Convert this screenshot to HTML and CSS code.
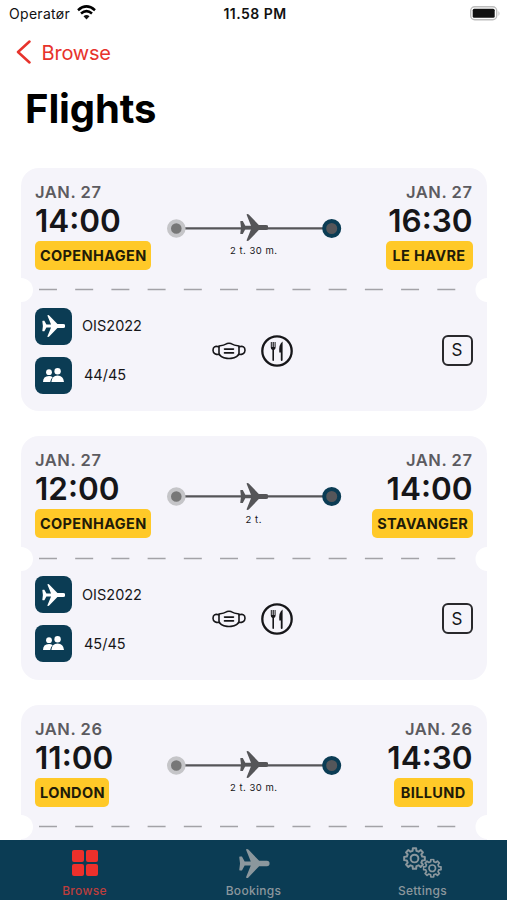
FILE: index.html
```html
<!DOCTYPE html>
<html lang="en">
<head>
<meta charset="utf-8">
<title>Flights</title>
<link rel="stylesheet" href="styles.css">
</head>
<body>
<svg class="defs" aria-hidden="true">
  <symbol id="plane" viewBox="0 0 28 27"><path d="M.8 7H2.8L5.3 11.7H11L6.6.8Q6.5 0 7.4 0 8.4 0 9 .8L18.8 11H26a2.5 2.5 0 0 1 0 5H18.8L9 26.2Q8.4 27 7.4 27 6.5 27 6.6 26.2L11 15.3H5.3L2.8 20H.8Q.2 20 .3 19.2L1 13.5.3 7.8Q.2 7 .8 7z"/></symbol>
  <symbol id="people" viewBox="0 0 21 15"><circle cx="6" cy="4.2" r="2.9"/><circle cx="14.6" cy="3.3" r="3.2"/><path d="M0 14q0-6 6-6 2.200 0 3.700 1.300Q7.400 11 7.200 14zM8.400 14q.4-6.500 6.200-6.500T21 14z"/></symbol>
  <symbol id="mask" viewBox="0 0 34 18"><g fill="none" stroke="currentColor" stroke-width="1.600" stroke-linecap="round" stroke-linejoin="round"><path d="M7 4Q12 3.400 15 1.600 17 .8 19 1.600 22 3.400 27 4V11.500Q26 15.200 19 16.400 17 16.700 15 16.400 8 15.200 7 11.500z"/><path d="M7 4.800C3 3.500 1 5 1 8.300S4 12.800 7.500 12.500M27 4.800c4-1.300 6 .2 6 3.500s-3 4.500-6.500 4.200M12.500 7.100h9M12.500 10.900h9"/></g></symbol>
  <symbol id="meal" viewBox="0 0 32 32"><circle cx="16" cy="16" r="14.700" fill="none" stroke="currentColor" stroke-width="2.300"/><path d="M9.800 7h1v5h.8V7h1.200v5h.8V7h1v5.500q0 1.800-1.600 2.400V25q0 1-.8 1t-.8-1V14.900q-1.600-.6-1.600-2.400zM21.600 6.500V25q0 1-.9 1t-.9-1V17.500h-1.500Q17.600 9 21.600 6.500z"/></symbol>
  <symbol id="gear" viewBox="-11 -11 22 22"><path d="M7.370-1.840 9.880-1.560V1.560L7.370 1.840 6.510 3.910 8.090 5.880 5.880 8.090 3.910 6.510 1.840 7.370 1.560 9.880H-1.560L-1.840 7.370-3.910 6.510-5.880 8.090-8.090 5.880-6.510 3.910-7.370 1.840-9.880 1.560V-1.560L-7.370-1.840-6.510-3.910-8.090-5.880-5.880-8.090-3.910-6.510-1.840-7.370-1.560-9.880H1.560L1.840-7.370 3.910-6.510 5.880-8.090 8.090-5.880 6.510-3.910z"/><circle r="3.700"/></symbol>
  <symbol id="route" viewBox="0 0 176 28"><path d="M10 14.300H166" stroke="#555558" stroke-width="2.300"/><circle cx="10.300" cy="14.500" r="7.300" fill="#777" stroke="#c5c5c8" stroke-width="4"/><circle cx="165.700" cy="14.500" r="7.500" fill="#55565a" stroke="#0b3c54" stroke-width="4"/></symbol>
  <symbol id="perforation" viewBox="0 0 467 26"><circle cx="0" cy="13" r="12" fill="#fff"/><circle cx="467" cy="13" r="12" fill="#fff"/><path d="M18 12.500H437" stroke="#a3a2a7" stroke-width="1.500" stroke-dasharray="18 18.250"/></symbol>
</svg>
<div class="screen">
  <header class="status">
    <div class="carrier"><span>Operatør</span>
      <svg width="19" height="15" viewBox="0 0 19 15"><g fill="none" stroke="#000" stroke-width="2.500"><path d="M1 5.200Q9.500-2.400 18 5.200M4 8.500q5.500-4.800 11 0"/></g><path d="M6.500 11.200q3-2.600 6 0l-3 3.300z"/></svg>
    </div>
    <div class="clock">11.58 PM</div>
    <svg class="battery" width="31" height="15" viewBox="0 0 31 15"><rect x=".7" y=".7" width="26" height="13" rx="4" fill="#fff" stroke="#bdbdbd" stroke-width="1.400"/><rect x="2.700" y="2.700" width="22" height="9" rx="1.500"/><path d="M28.500 5q2 2.300 0 5z" fill="#bbb"/></svg>
  </header>
  <nav class="back"><svg width="16" height="24" viewBox="0 0 16 24"><path d="M13.500 1.500 2 12l11.500 10.500" fill="none" stroke="#e7332c" stroke-width="2.500" stroke-linecap="round" stroke-linejoin="round"/></svg><span>Browse</span></nav>
  <h1>Flights</h1>
  <main class="list">
    <article class="ticket">
      <section class="trip">
        <div class="stop"><div class="date">JAN. 27</div><div class="time">14:00</div><div class="city">COPENHAGEN</div></div>
        <div class="route"><div class="track"><svg class="line"><use href="#route"/></svg><svg class="craft"><use href="#plane"/></svg></div><div class="duration">2 t. 30 m.</div></div>
        <div class="stop end"><div class="date">JAN. 27</div><div class="time">16:30</div><div class="city roomy">LE HAVRE</div></div>
      </section>
      <svg class="perforation"><use href="#perforation"/></svg>
      <section class="details">
        <div class="facts"><div class="fact"><i><svg class="small-plane"><use href="#plane"/></svg></i><span>OIS2022</span></div><div class="fact seats"><i><svg class="people"><use href="#people"/></svg></i><span>44/45</span></div></div>
        <div class="services"><svg class="mask"><use href="#mask"/></svg><svg class="meal"><use href="#meal"/></svg></div>
        <div class="class">S</div>
      </section>
    </article>
    <article class="ticket">
      <section class="trip">
        <div class="stop"><div class="date">JAN. 27</div><div class="time">12:00</div><div class="city">COPENHAGEN</div></div>
        <div class="route"><div class="track"><svg class="line"><use href="#route"/></svg><svg class="craft"><use href="#plane"/></svg></div><div class="duration">2 t.</div></div>
        <div class="stop end"><div class="date">JAN. 27</div><div class="time">14:00</div><div class="city stavanger">STAVANGER</div></div>
      </section>
      <svg class="perforation"><use href="#perforation"/></svg>
      <section class="details">
        <div class="facts"><div class="fact"><i><svg class="small-plane"><use href="#plane"/></svg></i><span>OIS2022</span></div><div class="fact seats"><i><svg class="people"><use href="#people"/></svg></i><span>45/45</span></div></div>
        <div class="services"><svg class="mask"><use href="#mask"/></svg><svg class="meal"><use href="#meal"/></svg></div>
        <div class="class">S</div>
      </section>
    </article>
    <article class="ticket">
      <section class="trip">
        <div class="stop"><div class="date">JAN. 26</div><div class="time">11:00</div><div class="city">LONDON</div></div>
        <div class="route"><div class="track"><svg class="line"><use href="#route"/></svg><svg class="craft"><use href="#plane"/></svg></div><div class="duration">2 t. 30 m.</div></div>
        <div class="stop end"><div class="date">JAN. 26</div><div class="time">14:30</div><div class="city roomy">BILLUND</div></div>
      </section>
      <svg class="perforation"><use href="#perforation"/></svg>
    </article>
  </main>
  <footer class="tabs">
    <div class="tab active"><div class="tab-icon"><svg width="26" height="26" viewBox="0 0 26 26"><rect width="12" height="12" rx="2"/><rect x="14" width="12" height="12" rx="2"/><rect y="14" width="12" height="12" rx="2"/><rect x="14" y="14" width="12" height="12" rx="2"/></svg></div><span>Browse</span></div>
    <div class="tab"><div class="tab-icon"><svg class="tab-plane"><use href="#plane"/></svg></div><span>Bookings</span></div>
    <div class="tab"><div class="tab-icon"><svg width="40" height="32" viewBox="0 0 40 32"><g fill="none" stroke="currentColor" stroke-width="1.900" stroke-linejoin="round"><use href="#gear" x="0" y="0" width="23" height="23"/><use href="#gear" x="19.500" y="11.500" width="19.500" height="19.500"/></g></svg></div><span>Settings</span></div>
  </footer>
</div>
</body>
</html>
```
FILE: styles.css
```css
* { box-sizing: border-box; }
body { margin: 0; background: #fff; font-family: Inter, "Liberation Sans", sans-serif; color: #161619; }
svg { display: block; fill: currentColor; }
.defs { display: none; }
.screen { width: 507px; height: 900px; overflow: hidden; display: grid; grid-template-rows: 28px 48px 64px 700px 60px; }
.status { display: grid; grid-template-columns: 1fr 70px 1fr; align-items: center; color: #111; padding: 0 6px 0 9px; }
.carrier { display: flex; align-items: center; gap: 7px; font-size: 14px; letter-spacing: .3px; line-height: 17px; margin-top: -1px; }
.carrier svg { margin-top: -2px; }
.clock { font-size: 14px; font-weight: 600; text-align: center; white-space: nowrap; letter-spacing: .45px; margin-top: -1px; }
.battery { justify-self: end; margin-top: -2px; }
.back { display: flex; align-items: center; gap: 9.500px; padding-left: 16px; color: #e7332c; font-size: 20px; letter-spacing: -.2px; }
.back span { margin-top: 1px; }
h1 { margin: 0; padding: 9px 0 0 25px; color: #000; font-size: 40px; line-height: 48px; font-weight: 700; letter-spacing: -.1px; }
.list { overflow: hidden; padding: 27.500px 20px 0 20.500px; display: flex; flex-direction: column; gap: 25px; }
.ticket { flex: none; height: 243.700px; border-radius: 18px; background: #f5f4fa; display: grid; grid-template-rows: 109.500px 26px 108.200px; }
.trip { display: grid; grid-template-columns: 125px 1fr 125px; padding: 15px 14.500px 0; }
.stop { display: flex; flex-direction: column; align-items: flex-start; }
.stop.end { align-items: flex-end; }
.date { height: 19px; line-height: 19px; font-size: 16.500px; font-weight: 600; color: #5c5b60; letter-spacing: .55px; }
.time { height: 39px; line-height: 38px; font-size: 31.500px; font-weight: 600; }
.city { height: 29px; line-height: 29px; padding: 0 4.500px 0 5px; border-radius: 5px; background: #ffc928; color: #211b08; font-size: 14.500px; font-weight: 700; letter-spacing: .36px; white-space: nowrap; }
.city.roomy { padding: 0 7px; }
.city.stavanger { letter-spacing: .26px; }
.route { display: flex; flex-direction: column; align-items: center; padding-top: 31px; }
.track { display: grid; place-items: center; height: 28px; width: 176px; }
.track > svg { grid-area: 1 / 1; }
.line { width: 176px; height: 28px; }
.craft { width: 28px; height: 27px; color: #555558; margin-left: 1px; }
.duration { font-size: 9.500px; line-height: 14px; margin-top: 2.500px; letter-spacing: .5px; white-space: nowrap; }
.perforation { width: 466.500px; height: 26px; }
.details { display: grid; grid-template-columns: 125px 1fr 125px; padding: 4.500px 14.500px 0; }
.facts { display: flex; flex-direction: column; gap: 12px; }
.fact { display: flex; align-items: center; gap: 10px; font-size: 14.500px; height: 37px; }
.fact span { margin-top: -1px; }
.seats { gap: 12px; }
.fact i { width: 37px; height: 37px; border-radius: 8px; background: #0b3c54; color: #fff; display: grid; place-items: center; }
.small-plane { width: 23px; height: 22px; }
.people { width: 21px; height: 15px; }
.services { display: flex; align-items: center; justify-content: center; gap: 15px; height: 86px; padding-right: 2px; }
.mask { width: 34px; height: 18px; }
.meal { width: 32px; height: 32px; }
.class { justify-self: end; margin-top: 27px; width: 31px; height: 31px; border: 2px solid #29292c; border-radius: 6px; display: grid; place-items: center; font-size: 17px; }
.tabs { display: grid; grid-template-columns: repeat(3, 1fr); background: #0b3c54; color: #8b979d; }
.tab { display: flex; flex-direction: column; align-items: center; font-size: 12px; font-weight: 500; letter-spacing: .3px; }
.tab-icon { height: 43px; display: grid; place-items: center; padding-top: 3px; }
.tab span { line-height: 16px; }
.active { color: #bd3e3d; }
.active .tab-icon { color: #ed302b; }
.tab-plane { width: 32px; height: 29px; }
```
